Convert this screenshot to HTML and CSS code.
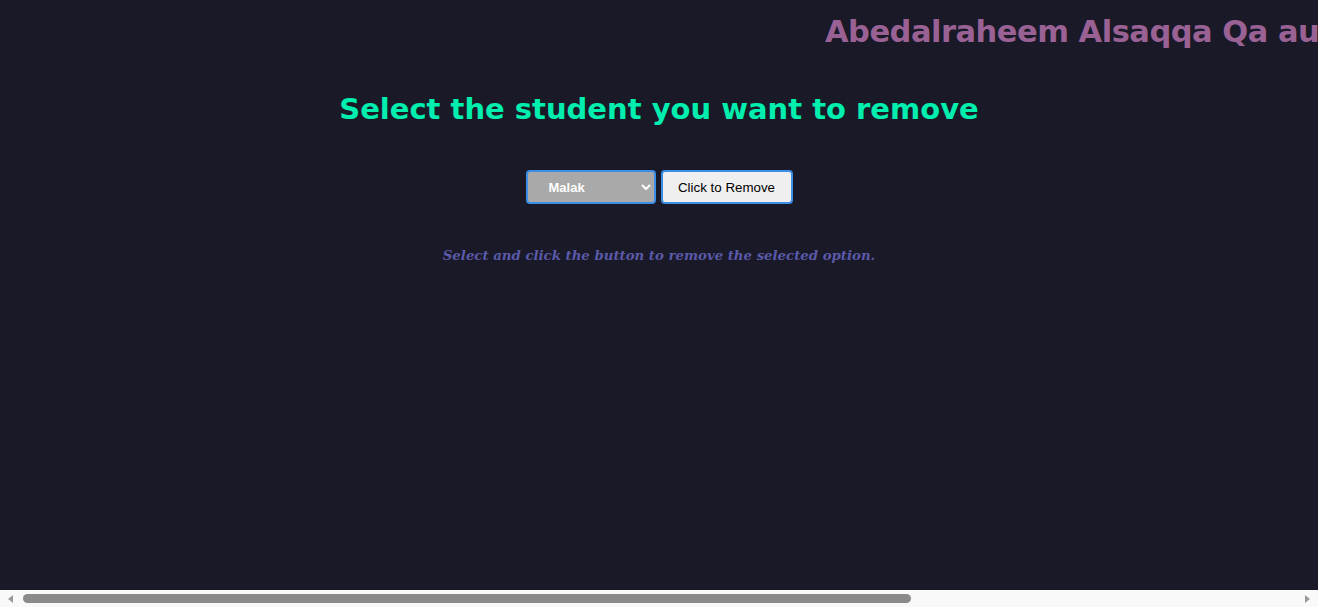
FILE: index.html
```html
<!DOCTYPE html>
<html>
<head>
<meta charset="utf-8">
<link rel="stylesheet" href="styles.css">
</head>
<body>
<div class="page">
  <div class="author-row"><span class="author">Abedalraheem Alsaqqa Qa automation</span></div>
  <h1 class="title">Select the student you want to remove</h1>
  <div class="controls">
    <select class="student-select">
      <option>Malak</option>
      <option>Ahmad</option>
      <option>Sara</option>
    </select>
    <button class="remove-btn">Click to Remove</button>
  </div>
  <p class="hint">Select and click the button to remove the selected option.</p>
</div>
<div class="hscroll">
  <div class="arrow arrow-left"></div>
  <div class="track"><div class="thumb"></div></div>
  <div class="arrow arrow-right"></div>
</div>
</body>
</html>
```
FILE: styles.css
```css
html, body {
  margin: 0;
  padding: 0;
}
body {
  background: #191928;
  height: 607px;
  overflow: hidden;
  display: flex;
  flex-direction: column;
}
.page {
  flex: 1;
  overflow: hidden;
  min-height: 0;
}
.author-row {
  padding-left: 825px;
  padding-top: 14px;
  white-space: nowrap;
  line-height: 36px;
}
.author {
  font-family: "DejaVu Sans", "Liberation Sans", sans-serif;
  font-weight: 700;
  font-size: 30.5px;
  letter-spacing: -0.5px;
  color: #9a6294;
}
.title {
  margin: 37px 0 0;
  text-align: center;
  font-family: "DejaVu Sans", "Liberation Sans", sans-serif;
  font-weight: 700;
  font-size: 29px;
  line-height: 34px;
  color: #00eeae;
}
.controls {
  display: flex;
  justify-content: center;
  gap: 5px;
  margin-top: 44px;
}
.student-select {
  width: 130px;
  height: 34px;
  background: #a9a9a9;
  color: #fff;
  font-family: "Liberation Sans", Arial, sans-serif;
  font-weight: 700;
  font-size: 13px;
  border: 2.5px solid #3a8ee6;
  border-radius: 4px;
  padding: 0 0 0 17px;
}
.remove-btn {
  width: 132px;
  height: 34px;
  background: #efefef;
  color: #000;
  font-family: "Liberation Sans", Arial, sans-serif;
  font-size: 13.33px;
  border: 2.5px solid #3a8ee6;
  border-radius: 4px;
}
.hint {
  margin: 44px 0 0;
  text-align: center;
  font-family: "DejaVu Serif", Georgia, serif;
  font-style: italic;
  font-weight: 700;
  font-size: 13.3px;
  line-height: 16px;
  color: #5b5aa8;
}
.hscroll {
  height: 17px;
  flex: none;
  background: #f9f9f9;
  display: flex;
  align-items: center;
}
.arrow {
  width: 17px;
  height: 17px;
  position: relative;
}
.arrow::before {
  content: "";
  position: absolute;
  top: 5px;
  border-top: 4px solid transparent;
  border-bottom: 4px solid transparent;
}
.arrow-left::before {
  left: 8px;
  border-right: 5px solid #9a9a9a;
}
.arrow-right::before {
  left: 4px;
  border-left: 5px solid #9a9a9a;
}
.track {
  flex: 1;
  height: 17px;
  display: flex;
  align-items: center;
}
.thumb {
  margin-left: 6px;
  width: 888px;
  height: 9px;
  border-radius: 5px;
  background: #8a8a8a;
}
```
